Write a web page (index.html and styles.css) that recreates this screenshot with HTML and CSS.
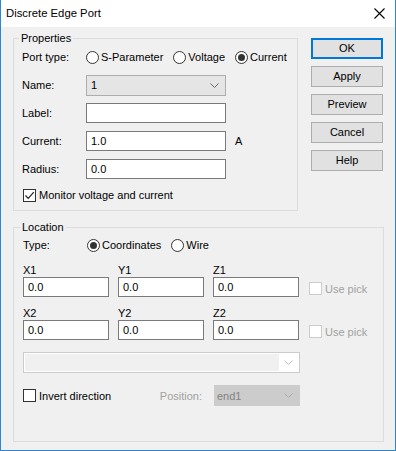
FILE: index.html
```html
<!DOCTYPE html>
<html lang="en">
<head>
    <meta charset="UTF-8">
    <title>Discrete Edge Port</title>
    <link rel="stylesheet" href="styles.css">
</head>
<body>

<div class="window">
    <div class="titlebar">
        <span class="title">Discrete Edge Port</span>
        <svg class="close" width="11" height="11" viewBox="0 0 11 11"><path d="M0.5 0.5L10.5 10.5M10.5 0.5L0.5 10.5" stroke="#000" stroke-width="1.1" fill="none"/></svg>
    </div>

    <div class="content">
        <div class="top">
            <fieldset class="group props">
                <legend>Properties</legend>

                <div class="row radios">
                    <span class="lbl">Port type:</span>
                    <span class="radio"><i class="circle"></i>S-Parameter</span>
                    <span class="radio"><i class="circle"></i>Voltage</span>
                    <span class="radio"><i class="circle on"></i>Current</span>
                </div>

                <div class="row field">
                    <span class="lbl">Name:</span>
                    <div class="combo">
                        <span>1</span>
                        <svg width="9" height="5" viewBox="0 0 9 5"><path d="M0.5 0.5L4.5 4.5L8.5 0.5" stroke="#666" fill="none"/></svg>
                    </div>
                </div>

                <div class="row field">
                    <span class="lbl">Label:</span>
                    <div class="textbox"></div>
                </div>

                <div class="row field">
                    <span class="lbl">Current:</span>
                    <div class="textbox">1.0</div>
                    <span class="unit">A</span>
                </div>

                <div class="row field">
                    <span class="lbl">Radius:</span>
                    <div class="textbox">0.0</div>
                </div>

                <div class="row check-row">
                    <span class="check">
                        <svg width="13" height="13" viewBox="0 0 13 13"><path d="M2.5 6.5L5.2 9.3L10.8 3.2" stroke="#222" stroke-width="1.2" fill="none"/></svg>
                    </span>
                    Monitor voltage and current
                </div>
            </fieldset>

            <div class="buttons">
                <div class="btn default">OK</div>
                <div class="btn">Apply</div>
                <div class="btn">Preview</div>
                <div class="btn">Cancel</div>
                <div class="btn">Help</div>
            </div>
        </div>

        <fieldset class="group location">
            <legend>Location</legend>

            <div class="row radios">
                <span class="lbl">Type:</span>
                <span class="radio"><i class="circle on"></i>Coordinates</span>
                <span class="radio"><i class="circle"></i>Wire</span>
            </div>

            <div class="coords first">
                <div class="cell"><span>X1</span><div class="textbox">0.0</div></div>
                <div class="cell"><span>Y1</span><div class="textbox">0.0</div></div>
                <div class="cell"><span>Z1</span><div class="textbox">0.0</div></div>
                <span class="pick"><i class="check off"></i>Use pick</span>
            </div>

            <div class="coords">
                <div class="cell"><span>X2</span><div class="textbox">0.0</div></div>
                <div class="cell"><span>Y2</span><div class="textbox">0.0</div></div>
                <div class="cell"><span>Z2</span><div class="textbox">0.0</div></div>
                <span class="pick"><i class="check off"></i>Use pick</span>
            </div>

            <div class="wide-combo">
                <span class="well"></span>
                <span class="arrow">
                    <svg width="9" height="5" viewBox="0 0 9 5"><path d="M0.5 0.5L4.5 4.5L8.5 0.5" stroke="#bdbdbd" fill="none"/></svg>
                </span>
            </div>

            <div class="row invert-row">
                <span class="check"></span>
                Invert direction
                <span class="position">Position:</span>
                <div class="combo disabled">
                    <span>end1</span>
                    <svg width="9" height="5" viewBox="0 0 9 5"><path d="M0.5 0.5L4.5 4.5L8.5 0.5" stroke="#aaa" fill="none"/></svg>
                </div>
            </div>
        </fieldset>
    </div>
</div>

</body>
</html>
```

FILE: styles.css
```css
body {
    margin: 0;
    font-family: "Liberation Sans", Arial, sans-serif;
    font-size: 11px;
    color: #000;
    background: #f0f0f0;
}
.window {
    width: 396px;
    height: 451px;
    box-sizing: border-box;
    border: 1px solid #2a87d0;
    border-top: 0;
    background: #f0f0f0;
}
.titlebar {
    height: 27px;
    background: #fff;
    display: flex;
    align-items: center;
    justify-content: space-between;
    padding: 0 10px 1px 5px;
    box-sizing: border-box;
    font-size: 11.3px;
}
.close {
    margin-top: 1px;
}
.content {
    padding: 4px 12px 0 12px;
}
.top {
    display: flex;
    align-items: flex-start;
}

/* group boxes */
.group {
    margin: 0;
    border: 1px solid #dcdcdc;
    box-sizing: border-box;
    min-width: 0;
}
.group legend {
    line-height: 14px;
    padding: 0 2px;
    margin-left: -3px;
}
.props {
    width: 285px;
    padding: 2px 8px 7px 8px;
}
.location {
    width: 371px;
    margin-top: 9px;
    padding: 1px 8px 35px 9px;
}

.row {
    display: flex;
    align-items: center;
    white-space: nowrap;
}
.lbl {
    width: 64px;
    flex: none;
}
.radios {
    height: 20px;
}
.radio {
    display: flex;
    align-items: center;
    flex: none;
    margin-right: 10px;
}
.circle {
    width: 11px;
    height: 11px;
    border: 1px solid #333;
    border-radius: 50%;
    background: #fff;
    margin-right: 2px;
    position: relative;
}
.circle.on::after {
    content: "";
    position: absolute;
    left: 2px;
    top: 2px;
    width: 7px;
    height: 7px;
    border-radius: 50%;
    background: #333;
}

.field {
    height: 20px;
    margin-top: 8px;
}
.props .field:first-of-type {
    margin-top: 7px;
}
.textbox {
    width: 140px;
    height: 20px;
    box-sizing: border-box;
    border: 1px solid #7a7a7a;
    background: #fff;
    padding-left: 4px;
    line-height: 18px;
}
.combo {
    width: 140px;
    height: 21px;
    box-sizing: border-box;
    border: 1px solid #adadad;
    background: #e5e5e5;
    display: flex;
    align-items: center;
    justify-content: space-between;
    padding: 0 6px 0 4px;
}
.unit {
    margin-left: 9px;
}

.check-row {
    height: 16px;
    margin-top: 8px;
}
.check {
    width: 13px;
    height: 13px;
    box-sizing: border-box;
    border: 1px solid #333;
    background: #fff;
    margin: 0 3px 0 1px;
    display: inline-block;
    flex: none;
}
.check svg {
    display: block;
    margin: -1px;
}
.check.off {
    border-color: #cccccc;
    margin: 0 3px 0 0;
}

/* buttons */
.buttons {
    margin-left: 13px;
    padding-top: 7px;
    display: flex;
    flex-direction: column;
    gap: 7px;
}
.btn {
    width: 72px;
    height: 21px;
    box-sizing: border-box;
    border: 1px solid #adadad;
    background: #e1e1e1;
    text-align: center;
    line-height: 19px;
}
.btn.default {
    border: 2px solid #0078d7;
    line-height: 17px;
}

/* location */
.coords {
    display: flex;
    align-items: flex-end;
    margin-top: 9px;
}
.coords.first {
    margin-top: 8px;
}
.cell {
    width: 86px;
    margin-right: 9px;
}
.cell span {
    display: block;
    height: 14px;
    line-height: 14px;
}
.cell .textbox {
    width: 86px;
}
.pick {
    display: flex;
    align-items: center;
    color: #a0a0a0;
    margin: 0 0 2px 1px;
}
.wide-combo {
    width: 277px;
    height: 21px;
    box-sizing: border-box;
    margin-top: 12px;
    border: 1px solid #cccccc;
    background: #fff;
    padding: 1px;
    display: flex;
}
.wide-combo .well {
    flex: 1;
    background: #f0f0f0;
}
.wide-combo .arrow {
    width: 19px;
    display: flex;
    align-items: center;
    justify-content: center;
}
.invert-row {
    width: 277px;
    height: 21px;
    margin-top: 12px;
}
.invert-row .check {
    margin-left: 0;
}
.position {
    margin-left: auto;
    margin-right: 12px;
    color: #a0a0a0;
}
.combo.disabled {
    width: 86px;
    background: #cccccc;
    border-color: #cccccc;
    color: #838383;
    padding: 0 6px 0 2px;
}
```
